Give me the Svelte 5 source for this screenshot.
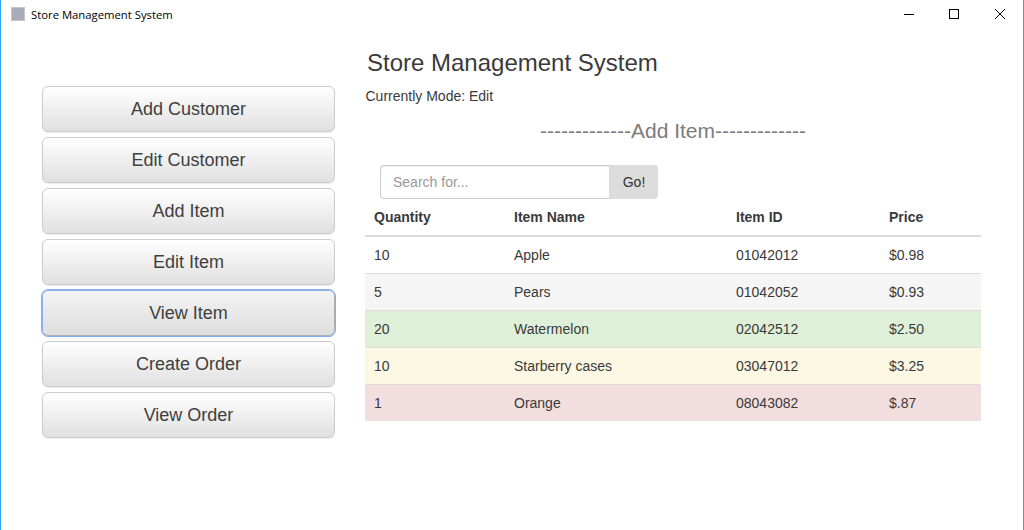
<script>
    const menu = ['Add Customer', 'Edit Customer', 'Add Item', 'Edit Item', 'View Item', 'Create Order', 'View Order']
    const items = [
        { qty: '10', name: 'Apple', id: '01042012', price: '$0.98', tone: '' },
        { qty: '5', name: 'Pears', id: '01042052', price: '$0.93', tone: 'active' },
        { qty: '20', name: 'Watermelon', id: '02042512', price: '$2.50', tone: 'success' },
        { qty: '10', name: 'Starberry cases', id: '03047012', price: '$3.25', tone: 'warning' },
        { qty: '1', name: 'Orange', id: '08043082', price: '$.87', tone: 'danger' }
    ]
</script>

<div class="window">
    <header class="titlebar">
        <span class="appicon"></span>
        <span class="apptitle">Store Management System</span>
        <div class="controls">
            <svg width="46" height="30" viewBox="0 0 46 30"><path d="M19 14.5h10" stroke="#000" fill="none" /></svg>
            <svg width="46" height="30" viewBox="0 0 46 30"><rect x="18.5" y="9.5" width="9" height="9" stroke="#000" fill="none" /></svg>
            <svg width="46" height="30" viewBox="0 0 46 30"><path d="M18 9l10 10M28 9l-10 10" stroke="#000" fill="none" /></svg>
        </div>
    </header>

    <div class="content">
        <nav class="sidebar">
            {#each menu as label}
                <button class="menubtn" class:focused={label === 'View Item'}>{label}</button>
            {/each}
        </nav>

        <main class="main">
            <h3>Store Management System</h3>
            <p class="mode">Currently Mode: Edit</p>
            <h4>-------------Add Item-------------</h4>
            <div class="search">
                <input type="text" placeholder="Search for..." />
                <button>Go!</button>
            </div>
            <table>
                <thead>
                    <tr>
                        <th class="c1">Quantity</th>
                        <th class="c2">Item Name</th>
                        <th class="c3">Item ID</th>
                        <th>Price</th>
                    </tr>
                </thead>
                <tbody>
                    {#each items as item}
                        <tr class={item.tone}>
                            <td>{item.qty}</td>
                            <td>{item.name}</td>
                            <td>{item.id}</td>
                            <td>{item.price}</td>
                        </tr>
                    {/each}
                </tbody>
            </table>
        </main>
    </div>
</div>

<style>
    :global(body) {
        margin: 0;
        background: #fff;
    }

    .window {
        box-sizing: border-box;
        width: 1024px;
        height: 530px;
        border-left: 1px solid #2aa5f5;
        border-right: 1px solid #2aa5f5;
        font-family: "Liberation Sans", Arial, sans-serif;
        color: #3a3a3a;
        overflow: hidden;
    }

    .titlebar {
        display: flex;
        align-items: center;
        height: 28px;
        padding: 0 0 2px 10px;
    }

    .appicon {
        width: 12px;
        height: 12px;
        background: #a9abb8;
        border: 0.5px solid #c4c6ce;
        margin-right: 6px;
    }

    .apptitle {
        font-family: "Open Sans", "Noto Sans", sans-serif;
        font-size: 11.3px;
        color: #000;
    }

    .controls {
        display: flex;
        margin: 2px 0 0 auto;
    }

    .controls svg {
        display: block;
    }

    .content {
        display: flex;
        align-items: flex-start;
    }

    .sidebar {
        display: flex;
        flex-direction: column;
        gap: 5px;
        width: 293px;
        margin: 56px 30px 0 41px;
    }

    .menubtn {
        height: 46px;
        padding: 0;
        font: 18px "Liberation Sans", Arial, sans-serif;
        color: #3f3f3f;
        background: linear-gradient(to bottom, #fff 0%, #e0e0e0 100%);
        border: 1px solid #ccc;
        border-radius: 6px;
        box-shadow: 0 1px 1px rgba(0, 0, 0, 0.075);
    }

    .menubtn.focused {
        background: linear-gradient(to bottom, #f3f3f3 0%, #dedede 100%);
        border-color: #8fb0ea #a9afbb #a9afbb #8fb0ea;
        outline: 1px solid #86aef0;
    }

    .main {
        width: 616px;
    }

    h3 {
        margin: 18px 0 0 2px;
        font-size: 24px;
        font-weight: 500;
        line-height: 30px;
    }

    .mode {
        margin: 8px 0 0 0.5px;
        font-size: 14px;
        line-height: 20px;
    }

    h4 {
        margin: 13px 0 0;
        font-size: 21px;
        font-weight: 500;
        line-height: 24px;
        color: #7c7c7c;
        text-align: center;
    }

    .search {
        display: flex;
        width: 278px;
        height: 34px;
        margin: 22px 0 0 15px;
    }

    .search input {
        box-sizing: border-box;
        width: 229px;
        height: 34px;
        padding: 6px 12px;
        font: 14px "Liberation Sans", Arial, sans-serif;
        border: 1px solid #ccc;
        border-right: 0;
        border-radius: 4px 0 0 4px;
        box-shadow: inset 0 1px 1px rgba(0, 0, 0, 0.075);
    }

    .search input::placeholder {
        color: #999;
    }

    .search button {
        width: 49px;
        height: 34px;
        padding: 0 0 0 1px;
        font: 14px "Liberation Sans", Arial, sans-serif;
        color: #333;
        background: #dcdcdc;
        border: 0;
        border-radius: 0 4px 4px 0;
    }

    table {
        width: 616px;
        border-collapse: collapse;
        table-layout: fixed;
        font-size: 14px;
    }

    th {
        height: 36px;
        padding: 0 8px 0 9px;
        text-align: left;
        font-weight: 700;
        border-bottom: 2px solid #ddd;
    }

    .c1 {
        width: 123px;
    }

    .c2 {
        width: 205px;
    }

    .c3 {
        width: 136px;
    }

    td {
        height: 36px;
        padding: 0 8px 0 9px;
        border-top: 1px solid #ddd;
    }

    tbody tr:first-child td {
        border-top: 0;
    }

    .active td {
        background: #f5f5f5;
    }

    .success td {
        background: #dff0d8;
    }

    .warning td {
        background: #fcf8e3;
    }

    .danger td {
        background: #f2dede;
    }
</style>
